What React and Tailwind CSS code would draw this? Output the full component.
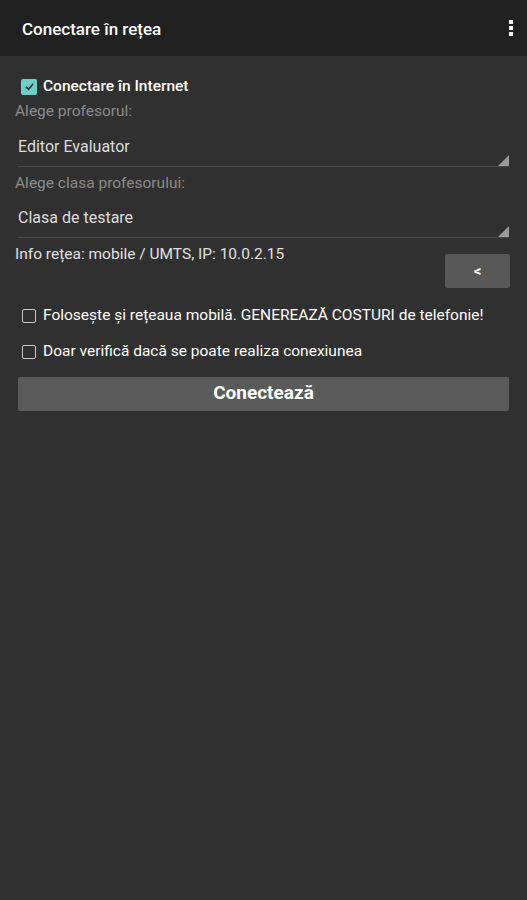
import React from "react";

function Check({ checked }) {
  if (checked) {
    return (
      <div className="w-[16px] h-[16px] rounded-[2px] bg-[#6fcfc6] flex items-center justify-center shrink-0">
        <svg width="11" height="11" viewBox="0 0 12 12">
          <path d="M2 6.5 L5 9 L10 3" fill="none" stroke="#1f3a38" strokeWidth="1.8" />
        </svg>
      </div>
    );
  }
  return <div className="w-[14px] h-[14px] border-[1.5px] border-[#c8c8c8] rounded-[2px] shrink-0" />;
}

function Spinner({ text }) {
  return (
    <div className="relative mx-[18px] h-[55px] border-b border-[#4a4a4a] flex items-end pb-[9px]">
      <span className="text-[16px] leading-[20px] text-[#dcdcdc]">{text}</span>
      <svg className="absolute right-0 bottom-0" width="11" height="11" viewBox="0 0 11 11">
        <polygon points="11,0 11,11 0,11" fill="#9a9a9a" />
      </svg>
    </div>
  );
}

export default function App() {
  return (
    <div className="w-[527px] h-[900px] bg-[#303030] flex flex-col" style={{ fontFamily: "Roboto, 'Noto Sans', sans-serif" }}>
      <div className="h-[56px] bg-[#212121] flex items-center justify-between pl-[22px] pr-[14px] shrink-0">
        <span className="text-[17px] font-medium text-white mt-[3px]">Conectare în rețea</span>
        <div className="flex flex-col gap-[2px]">
          <div className="w-[4px] h-[4px] bg-white" />
          <div className="w-[4px] h-[4px] bg-white" />
          <div className="w-[4px] h-[4px] bg-white" />
        </div>
      </div>
      <div className="flex flex-col">
        <div className="flex items-center gap-[6px] pl-[21px] mt-[22px] h-[17px]">
          <Check checked />
          <span className="text-[15.5px] font-medium text-white">Conectare în Internet</span>
        </div>
        <div className="pl-[15px] mt-[6px] text-[15.5px] text-[#8c8c8c] leading-[20px]">Alege profesorul:</div>
        <div className="-mt-[9px]"><Spinner text="Editor Evaluator" /></div>
        <div className="pl-[15px] mt-[6px] text-[15.5px] text-[#8c8c8c] leading-[20px]">Alege clasa profesorului:</div>
        <div className="-mt-[10px]"><Spinner text="Clasa de testare" /></div>
        <div className="flex justify-between items-start pl-[15px] pr-[17px] mt-[6px]">
          <span className="text-[15.5px] text-[#e0e0e0] leading-[20px]">Info rețea: mobile / UMTS, IP: 10.0.2.15</span>
          <div className="mt-[10px] w-[65px] h-[34px] bg-[#585858] rounded-[2px] flex items-center justify-center text-white font-bold text-[15px]">&lt;</div>
        </div>
        <div className="flex items-center gap-[7px] pl-[22px] mt-[16px]">
          <Check />
          <span className="text-[15.5px] text-white">Folosește și rețeaua mobilă. GENEREAZĂ COSTURI de telefonie!</span>
        </div>
        <div className="flex items-center gap-[7px] pl-[22px] mt-[13px]">
          <Check />
          <span className="text-[15.5px] text-white">Doar verifică dacă se poate realiza conexiunea</span>
        </div>
        <div className="mx-[18px] mt-[13px] h-[34px] bg-[#5a5a5a] rounded-[2px] flex items-center justify-center">
          <span className="text-[19px] font-bold text-white">Conectează</span>
        </div>
      </div>
    </div>
  );
}
